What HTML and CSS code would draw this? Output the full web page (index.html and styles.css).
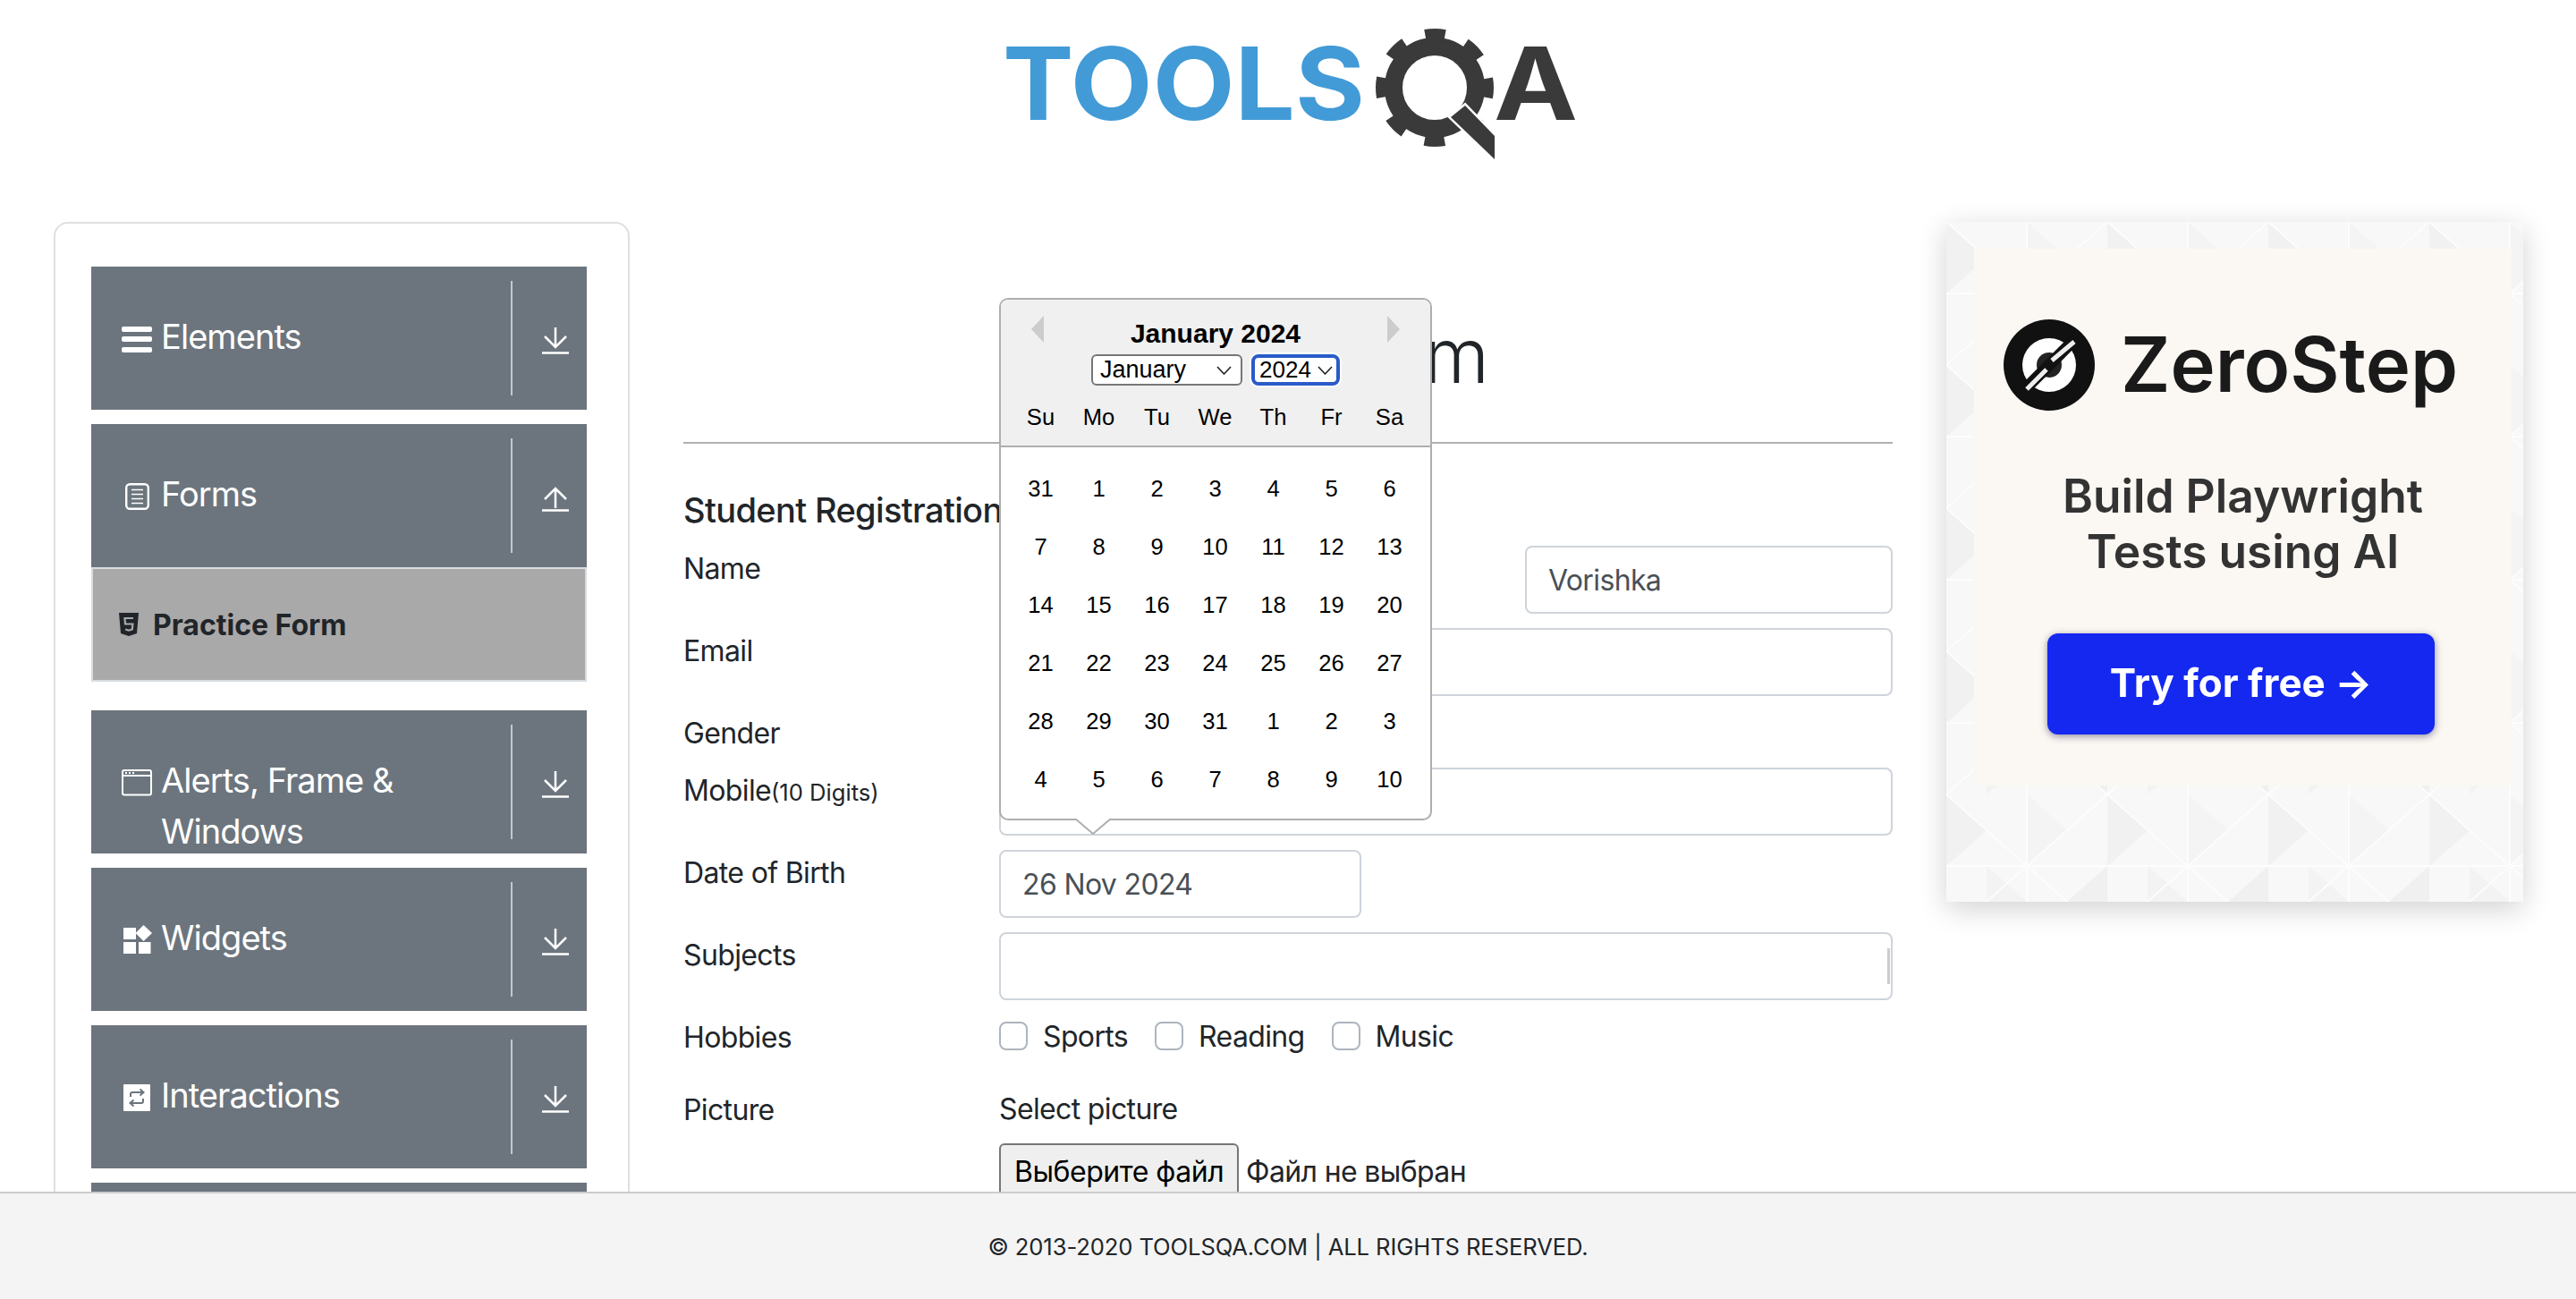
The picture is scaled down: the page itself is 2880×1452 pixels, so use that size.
FILE: index.html
```html
<!DOCTYPE html>
<html lang="en">
<head>
    <meta charset="UTF-8">
    <meta name="viewport" content="width=device-width, initial-scale=1.0">
    <title>ToolsQA - Practice Form</title>
    <link rel="stylesheet" href="styles.css">
</head>
<body>
    <header class="site-header">
        <svg class="logo" viewBox="1110 20 660 170" width="660" height="170">
            <text class="logo-tools" x="1121" y="134" textLength="405" lengthAdjust="spacingAndGlyphs">TOOLS</text>
            <circle cx="1604" cy="98" r="46" fill="none" stroke="#3a3a3a" stroke-width="20"/>
            <circle cx="1604" cy="98" r="59" fill="none" stroke="#3a3a3a" stroke-width="14" stroke-dasharray="22 24.34" stroke-dashoffset="11"/>
            <polygon points="1638,118 1671,152 1671,178 1622,131" fill="#3a3a3a" stroke="#fff" stroke-width="5" paint-order="stroke"/>
            <text class="logo-a" x="1670" y="134" textLength="94" lengthAdjust="spacingAndGlyphs">A</text>
        </svg>
    </header>

    <div class="page-body">
        <aside class="sidebar">
            <div class="nav-item">
                <div class="nav-label">
                    <svg class="nav-icon" viewBox="0 0 36 36" width="36" height="36">
                        <rect x="0" y="4" width="34" height="6" rx="2" fill="#fff"/>
                        <rect x="0" y="15" width="34" height="6" rx="2" fill="#fff"/>
                        <rect x="0" y="27" width="34" height="6" rx="2" fill="#fff"/>
                    </svg>
                    <span>Elements</span>
                </div>
                <div class="nav-arrow">
                    <svg viewBox="0 0 30 30" width="30" height="30"><path d="M15 0V21M3 10L15 22L27 10M0 28.5H30" fill="none" stroke="#fff" stroke-width="2.5"/></svg>
                </div>
            </div>

            <div class="nav-item nav-item-open">
                <div class="nav-label">
                    <svg class="nav-icon" viewBox="0 0 36 36" width="36" height="36">
                        <rect x="5.2" y="4.2" width="24.6" height="27.6" rx="4" fill="none" stroke="#fff" stroke-width="2.4"/>
                        <path d="M11 10.5H24M11 15.5H24M11 20.5H24M11 25.5H24" stroke="#fff" stroke-width="1.6"/>
                    </svg>
                    <span>Forms</span>
                </div>
                <div class="nav-arrow">
                    <svg viewBox="0 0 30 30" width="30" height="30"><path d="M15 26V4M3 16L15 4L27 16M0 28.5H30" fill="none" stroke="#fff" stroke-width="2.5"/></svg>
                </div>
            </div>
            <div class="nav-sub">
                <svg class="sub-icon" viewBox="0 0 22 26" width="22" height="26">
                    <path d="M0 0H22L20 23L11 26L2 23Z" fill="#212529"/>
                    <path d="M16 6H6.5L7 12.5H15.4L14.8 18.5L11 19.7L7.2 18.5" fill="none" stroke="#a9a9a9" stroke-width="2.2"/>
                </svg>
                <span>Practice Form</span>
            </div>

            <div class="nav-item">
                <div class="nav-label">
                    <svg class="nav-icon" viewBox="0 0 36 36" width="36" height="36">
                        <rect x="1" y="4" width="32" height="27.5" rx="2" fill="none" stroke="#fff" stroke-width="2"/>
                        <path d="M1 10H33" stroke="#fff" stroke-width="2"/>
                        <path d="M4 7H6M8 7H10M12 7H14" stroke="#fff" stroke-width="2"/>
                    </svg>
                    <span>Alerts, Frame &amp; Windows</span>
                </div>
                <div class="nav-arrow">
                    <svg viewBox="0 0 30 30" width="30" height="30"><path d="M15 0V21M3 10L15 22L27 10M0 28.5H30" fill="none" stroke="#fff" stroke-width="2.5"/></svg>
                </div>
            </div>

            <div class="nav-item">
                <div class="nav-label">
                    <svg class="nav-icon" viewBox="0 0 36 36" width="36" height="36">
                        <rect x="2" y="4" width="14" height="13" fill="#fff"/>
                        <polygon points="24.5,1 34,10 24.5,19 15.5,10" fill="#fff"/>
                        <rect x="2" y="20" width="14" height="13" fill="#fff"/>
                        <rect x="19" y="20" width="13.5" height="13" fill="#fff"/>
                    </svg>
                    <span>Widgets</span>
                </div>
                <div class="nav-arrow">
                    <svg viewBox="0 0 30 30" width="30" height="30"><path d="M15 0V21M3 10L15 22L27 10M0 28.5H30" fill="none" stroke="#fff" stroke-width="2.5"/></svg>
                </div>
            </div>

            <div class="nav-item">
                <div class="nav-label">
                    <svg class="nav-icon" viewBox="0 0 36 36" width="36" height="36">
                        <rect x="2" y="3" width="30" height="30" rx="1" fill="#fff"/>
                        <path d="M10 17V14C10 12.5 11 12 12 12H24M20.5 8.5L24.5 12L20.5 15.5M24 19V22C24 23.5 23 24 22 24H10M13.5 20.5L9.5 24L13.5 27.5" fill="none" stroke="#6c757d" stroke-width="2"/>
                    </svg>
                    <span>Interactions</span>
                </div>
                <div class="nav-arrow">
                    <svg viewBox="0 0 30 30" width="30" height="30"><path d="M15 0V21M3 10L15 22L27 10M0 28.5H30" fill="none" stroke="#fff" stroke-width="2.5"/></svg>
                </div>
            </div>

            <div class="nav-item"></div>
        </aside>

        <main class="form-col">
            <h1 class="form-title">Practice Form</h1>
            <hr class="form-rule">
            <h5 class="form-subtitle">Student Registration Form</h5>

            <div class="form-row">
                <label class="form-label">Name</label>
                <div class="name-fields">
                    <input class="form-input half">
                    <input class="form-input half" value="Vorishka">
                </div>
            </div>
            <div class="form-row">
                <label class="form-label">Email</label>
                <input class="form-input">
            </div>
            <div class="form-row">
                <label class="form-label">Gender</label>
            </div>
            <div class="form-row">
                <label class="form-label">Mobile<small>(10 Digits)</small></label>
                <input class="form-input">
            </div>
            <div class="form-row">
                <label class="form-label">Date of Birth</label>
                <input class="form-input dob" value="26 Nov 2024">
            </div>
            <div class="form-row">
                <label class="form-label">Subjects</label>
                <div class="subjects-box"><span class="subjects-bar"></span></div>
            </div>
            <div class="form-row hobbies-row">
                <label class="form-label">Hobbies</label>
                <div class="check-list">
                    <label class="check-item"><span class="check-box"></span>Sports</label>
                    <label class="check-item"><span class="check-box"></span>Reading</label>
                    <label class="check-item"><span class="check-box"></span>Music</label>
                </div>
            </div>
            <div class="form-row">
                <label class="form-label">Picture</label>
                <div class="picture-field">
                    <div class="picture-label">Select picture</div>
                    <div class="file-row">
                        <button class="file-btn">Выберите файл</button>
                        <span>Файл не выбран</span>
                    </div>
                </div>
            </div>

            <div class="datepicker">
                <div class="dp-head">
                    <span class="dp-prev"></span>
                    <span class="dp-next"></span>
                    <div class="dp-month">January 2024</div>
                    <div class="dp-selects">
                        <div class="dp-select dp-select-month">
                            <span>January</span>
                            <svg viewBox="0 0 17 10" width="17" height="10"><path d="M1 1L8.5 9L16 1" fill="none" stroke="#222" stroke-width="1.6"/></svg>
                        </div>
                        <div class="dp-select dp-select-year">
                            <span>2024</span>
                            <svg viewBox="0 0 17 10" width="17" height="10"><path d="M1 1L8.5 9L16 1" fill="none" stroke="#222" stroke-width="1.6"/></svg>
                        </div>
                    </div>
                    <div class="dp-names">
                        <span>Su</span><span>Mo</span><span>Tu</span><span>We</span><span>Th</span><span>Fr</span><span>Sa</span>
                    </div>
                </div>
                <div class="dp-days">
                    <span>31</span><span>1</span><span>2</span><span>3</span><span>4</span><span>5</span><span>6</span>
                    <span>7</span><span>8</span><span>9</span><span>10</span><span>11</span><span>12</span><span>13</span>
                    <span>14</span><span>15</span><span>16</span><span>17</span><span>18</span><span>19</span><span>20</span>
                    <span>21</span><span>22</span><span>23</span><span>24</span><span>25</span><span>26</span><span>27</span>
                    <span>28</span><span>29</span><span>30</span><span>31</span><span>1</span><span>2</span><span>3</span>
                    <span>4</span><span>5</span><span>6</span><span>7</span><span>8</span><span>9</span><span>10</span>
                </div>
                <svg class="dp-tail" viewBox="0 0 40 18" width="40" height="18">
                    <path d="M0 0L20 17L40 0" fill="#fff" stroke="#aeaeae" stroke-width="2"/>
                </svg>
            </div>
        </main>

        <aside class="ad">
            <svg class="ad-bg" width="645" height="760">
                <defs>
                    <pattern id="tri" width="180" height="160" patternUnits="userSpaceOnUse">
                        <rect width="180" height="160" fill="#f8f8f8"/>
                        <polygon points="0,0 45,40 0,80" fill="#f1f1f1"/>
                        <polygon points="90,0 135,40 90,80" fill="#f4f4f4"/>
                        <polygon points="45,80 90,120 45,160" fill="#f3f3f3"/>
                        <polygon points="180,80 135,120 180,160" fill="#f0f0f0"/>
                        <path d="M0 0L180 160M180 0L0 160M90 0V160M0 80H180" stroke="#fdfdfd" stroke-width="2"/>
                    </pattern>
                </defs>
                <rect width="645" height="760" fill="url(#tri)"/>
            </svg>
            <div class="ad-panel">
                <div class="ad-brand">
                    <svg viewBox="-52 -52 104 104" width="104" height="104">
                        <circle r="51" fill="#111"/>
                        <circle r="30" fill="#fff"/>
                        <circle r="14" fill="#222"/>
                        <path d="M-30 30L30 -30" stroke="#111" stroke-width="13"/>
                        <path d="M-25 27L-3 5M3 -5L28 -26" stroke="#eee" stroke-width="5"/>
                    </svg>
                    <span>ZeroStep</span>
                </div>
                <div class="ad-text">Build Playwright<br>Tests using AI</div>
                <div class="ad-btn">Try for free →</div>
            </div>
        </aside>
    </div>

    <footer class="site-footer">© 2013-2020 TOOLSQA.COM | ALL RIGHTS RESERVED.</footer>
</body>
</html>
```

FILE: styles.css
```css
body {
    margin: 0;
    height: 1452px;
    overflow: hidden;
    background-color: #fff;
    color: #212529;
    font-family: Inter, "Noto Sans", sans-serif;
    font-size: 32px;
    letter-spacing: -0.02em;
}

.site-header {
    display: flex;
    justify-content: center;
    box-sizing: border-box;
    height: 248px;
    padding-top: 20px;
}
.logo {
    filter: blur(0.6px);
}
.logo-tools {
    font-family: Inter, sans-serif;
    font-weight: 700;
    font-size: 113px;
    fill: #429bd7;
    letter-spacing: 0;
}
.logo-a {
    font-family: Inter, sans-serif;
    font-weight: 700;
    font-size: 113px;
    fill: #3a3a3a;
    letter-spacing: 0;
}

.page-body {
    display: flex;
    gap: 60px;
    box-sizing: border-box;
    height: 1224px;
    margin-top: -20px;
    padding: 20px 60px 0;
    overflow: hidden;
}

/* left menu */
.sidebar {
    box-sizing: border-box;
    width: 644px;
    height: 1300px;
    padding: 48px 46px 0 40px;
    border: 2px solid #dfdfdf;
    border-radius: 16px;
    flex-shrink: 0;
}
.nav-item {
    display: flex;
    height: 160px;
    margin-bottom: 16px;
    background-color: #6c757d;
    color: #fff;
    overflow: hidden;
}
.nav-item-open {
    margin-bottom: 0;
}
.nav-label {
    display: flex;
    flex: 1;
    align-items: flex-start;
    padding: 50px 0 0 34px;
    font-size: 38px;
    line-height: 57px;
    letter-spacing: -0.025em;
}
.nav-icon {
    flex-shrink: 0;
    margin: 13px 8px 0 0;
}
.nav-arrow {
    display: flex;
    align-items: center;
    box-sizing: border-box;
    width: 85px;
    margin: 16px 0;
    padding: 6px 0 0 33px;
    border-left: 2px solid #c4c8cc;
}
.nav-sub {
    display: flex;
    align-items: center;
    box-sizing: border-box;
    height: 128px;
    margin-bottom: 32px;
    padding-left: 29px;
    background-color: #a9a9a9;
    border: 2px solid #d8dce0;
    font-weight: 700;
    letter-spacing: 0;
}
.sub-icon {
    margin-right: 16px;
}

/* form */
.form-col {
    position: relative;
    width: 1352px;
    flex-shrink: 0;
}
.form-title {
    margin: 105px 0 0;
    padding-right: 83px;
    font-size: 84px;
    font-weight: 300;
    line-height: 90px;
    text-align: center;
}
.form-rule {
    margin: 51px 0 0;
    border: 0;
    border-top: 2px solid #b0b0b0;
}
.form-subtitle {
    margin: 45px 0 0;
    font-size: 38px;
    font-weight: 500;
    line-height: 58px;
    height: 69px;
}
.form-row {
    display: flex;
    margin-bottom: 16px;
}
.form-label {
    box-sizing: border-box;
    width: 353px;
    height: 48px;
    padding-top: 2px;
    flex-shrink: 0;
    line-height: 48px;
}
.form-label small {
    font-size: 25.6px;
    letter-spacing: 0;
}
.form-input {
    box-sizing: border-box;
    width: 999px;
    height: 76px;
    padding: 0 24px;
    border: 2px solid #ced4da;
    border-radius: 8px;
    color: #495057;
    font-family: inherit;
    font-size: 32px;
    letter-spacing: inherit;
}
.form-input.half {
    width: 411px;
}
.form-input.dob {
    width: 405px;
}
.name-fields {
    display: flex;
    justify-content: space-between;
    width: 999px;
}
.subjects-box {
    display: flex;
    align-items: center;
    justify-content: flex-end;
    box-sizing: border-box;
    width: 999px;
    height: 76px;
    border: 2px solid #ced4da;
    border-radius: 8px;
}
.subjects-bar {
    width: 3px;
    height: 40px;
    margin-right: 1px;
    background-color: #ccc;
}
.check-list {
    display: flex;
    gap: 30px;
}
.check-item {
    display: flex;
    align-items: center;
    gap: 17px;
    height: 48px;
}
.check-box {
    box-sizing: border-box;
    width: 32px;
    height: 32px;
    border: 2px solid #adb5bd;
    border-radius: 8px;
}
.hobbies-row {
    margin-bottom: 33px;
}
.picture-label {
    padding-top: 1px;
    line-height: 48px;
    margin-bottom: 14px;
}
.file-row {
    display: flex;
    align-items: center;
    gap: 8px;
}
.file-btn {
    height: 62px;
    padding: 0 15px;
    background-color: #efefef;
    border: 2px solid #767676;
    border-radius: 6px;
    color: #000;
    font-family: inherit;
    font-size: 32px;
    letter-spacing: -0.015em;
}

/* calendar popup */
.datepicker {
    position: absolute;
    left: 353px;
    top: 85px;
    box-sizing: border-box;
    width: 484px;
    height: 584px;
    background-color: #fff;
    border: 2px solid #aeaeae;
    border-radius: 10px;
    color: #000;
    font-family: "Liberation Sans", Arial, sans-serif;
    font-size: 25.6px;
    letter-spacing: 0;
}
.dp-head {
    position: relative;
    box-sizing: border-box;
    height: 165px;
    padding-top: 20px;
    background-color: #f0f0f0;
    border-bottom: 2px solid #aeaeae;
    border-radius: 8px 8px 0 0;
}
.dp-prev,
.dp-next {
    position: absolute;
    top: 18px;
    border-top: 15px solid transparent;
    border-bottom: 15px solid transparent;
}
.dp-prev {
    left: 34px;
    border-right: 14px solid #ccc;
}
.dp-next {
    right: 34px;
    border-left: 14px solid #ccc;
}
.dp-month {
    font-size: 30px;
    font-weight: 700;
    line-height: 36px;
    text-align: center;
}
.dp-selects {
    display: flex;
    margin-top: 5px;
    padding-left: 101px;
    gap: 10px;
}
.dp-select {
    display: flex;
    align-items: center;
    justify-content: space-between;
    box-sizing: border-box;
    height: 35px;
    background-color: #fff;
    border-radius: 6px;
    font-size: 27px;
}
.dp-select-month {
    width: 169px;
    padding: 0 10px 0 8px;
    border: 2px solid #767676;
}
.dp-select-year {
    width: 99px;
    padding: 0 4px 0 5px;
    border: 4px solid #2a5bc8;
    border-radius: 8px;
    box-shadow: 0 0 0 2px #fff;
    font-size: 26px;
}
.dp-names,
.dp-days {
    display: grid;
    grid-template-columns: repeat(7, 65px);
    padding: 0 12px;
    text-align: center;
}
.dp-names {
    margin-top: 12px;
    line-height: 46px;
}
.dp-days {
    margin-top: 14px;
    line-height: 65px;
}
.dp-tail {
    position: absolute;
    left: 83px;
    bottom: -18px;
}

/* banner */
.ad {
    position: relative;
    box-sizing: border-box;
    width: 645px;
    height: 760px;
    padding: 30px 13px 0 31px;
    box-shadow: 0 8px 30px rgba(0, 0, 0, 0.18);
    filter: blur(0.7px);
    flex-shrink: 0;
}
.ad-bg {
    position: absolute;
    left: 0;
    top: 0;
}
.ad-panel {
    position: relative;
    box-sizing: border-box;
    height: 600px;
    padding-top: 78px;
    background-color: #fbf8f3;
    color: #222;
    letter-spacing: 0;
}
.ad-brand {
    display: flex;
    align-items: center;
    gap: 28px;
    padding-left: 32px;
    font-size: 85px;
    font-weight: 600;
    color: #1a1a1a;
    line-height: 104px;
}
.ad-text {
    margin-top: 63px;
    font-size: 51.5px;
    font-weight: 600;
    line-height: 62px;
    text-align: center;
    color: #333;
}
.ad-btn {
    box-sizing: border-box;
    width: 433px;
    height: 113px;
    margin: 61px 0 0 82px;
    background-color: #1428f0;
    border-radius: 12px;
    box-shadow: 0 2px 8px rgba(0, 0, 60, 0.45);
    color: #fff;
    font-size: 44px;
    font-weight: 700;
    line-height: 111px;
    text-align: center;
}

.site-footer {
    position: fixed;
    left: 0;
    right: 0;
    bottom: 0;
    display: flex;
    align-items: center;
    justify-content: center;
    box-sizing: border-box;
    height: 120px;
    background-color: #f4f4f4;
    border-top: 2px solid #ccc;
    font-size: 25.6px;
    letter-spacing: -0.1px;
}
```
